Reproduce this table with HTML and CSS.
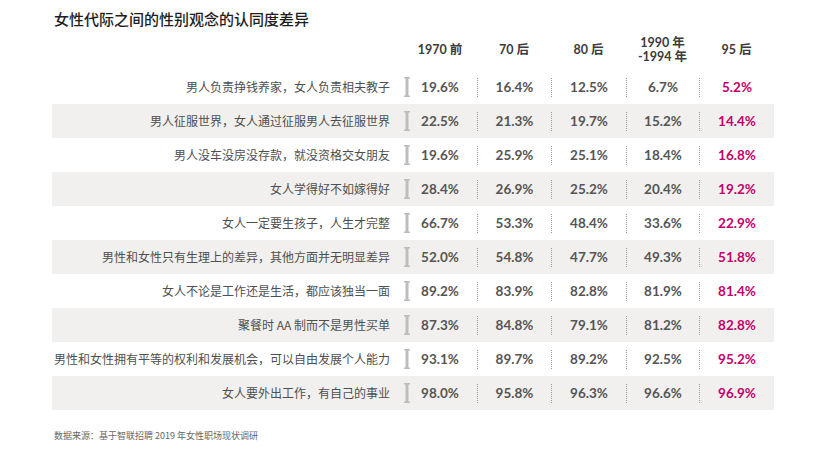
FILE: index.html
```html
<!DOCTYPE html>
<html lang="zh">
<head>
<meta charset="utf-8">
<link rel="stylesheet" href="styles.css">
</head>
<body>
<div class="page">
  <h1 class="title">女性代际之间的性别观念的认同度差异</h1>
  <div class="row head">
    <div class="label"></div>
    <div class="brkcell"></div>
    <div class="hc c1">1970 前</div>
    <div class="hc">70 后</div>
    <div class="hc">80 后</div>
    <div class="hc">1990 年<br>-1994 年</div>
    <div class="hc">95 后</div>
  </div>
  <div class="row">
    <div class="label">男人负责挣钱养家，女人负责相夫教子</div>
    <div class="brkcell"><svg class="brk" width="6" height="20" viewBox="0 0 6 20"><rect x="0" y="0" width="6" height="1.5"/><rect x="1.5" y="0" width="3" height="20"/><rect x="0" y="18.5" width="6" height="1.5"/></svg></div>
    <div class="v c1"><span>19.6%</span></div><div class="v sep"><span>16.4%</span></div><div class="v sep"><span>12.5%</span></div><div class="v sep"><span>6.7%</span></div><div class="v sep pink"><span>5.2%</span></div>
  </div>
  <div class="row alt">
    <div class="label">男人征服世界，女人通过征服男人去征服世界</div>
    <div class="brkcell"><svg class="brk" width="6" height="20" viewBox="0 0 6 20"><rect x="0" y="0" width="6" height="1.5"/><rect x="1.5" y="0" width="3" height="20"/><rect x="0" y="18.5" width="6" height="1.5"/></svg></div>
    <div class="v c1"><span>22.5%</span></div><div class="v sep"><span>21.3%</span></div><div class="v sep"><span>19.7%</span></div><div class="v sep"><span>15.2%</span></div><div class="v sep pink"><span>14.4%</span></div>
  </div>
  <div class="row">
    <div class="label">男人没车没房没存款，就没资格交女朋友</div>
    <div class="brkcell"><svg class="brk" width="6" height="20" viewBox="0 0 6 20"><rect x="0" y="0" width="6" height="1.5"/><rect x="1.5" y="0" width="3" height="20"/><rect x="0" y="18.5" width="6" height="1.5"/></svg></div>
    <div class="v c1"><span>19.6%</span></div><div class="v sep"><span>25.9%</span></div><div class="v sep"><span>25.1%</span></div><div class="v sep"><span>18.4%</span></div><div class="v sep pink"><span>16.8%</span></div>
  </div>
  <div class="row alt">
    <div class="label">女人学得好不如嫁得好</div>
    <div class="brkcell"><svg class="brk" width="6" height="20" viewBox="0 0 6 20"><rect x="0" y="0" width="6" height="1.5"/><rect x="1.5" y="0" width="3" height="20"/><rect x="0" y="18.5" width="6" height="1.5"/></svg></div>
    <div class="v c1"><span>28.4%</span></div><div class="v sep"><span>26.9%</span></div><div class="v sep"><span>25.2%</span></div><div class="v sep"><span>20.4%</span></div><div class="v sep pink"><span>19.2%</span></div>
  </div>
  <div class="row">
    <div class="label">女人一定要生孩子，人生才完整</div>
    <div class="brkcell"><svg class="brk" width="6" height="20" viewBox="0 0 6 20"><rect x="0" y="0" width="6" height="1.5"/><rect x="1.5" y="0" width="3" height="20"/><rect x="0" y="18.5" width="6" height="1.5"/></svg></div>
    <div class="v c1"><span>66.7%</span></div><div class="v sep"><span>53.3%</span></div><div class="v sep"><span>48.4%</span></div><div class="v sep"><span>33.6%</span></div><div class="v sep pink"><span>22.9%</span></div>
  </div>
  <div class="row alt">
    <div class="label">男性和女性只有生理上的差异，其他方面并无明显差异</div>
    <div class="brkcell"><svg class="brk" width="6" height="20" viewBox="0 0 6 20"><rect x="0" y="0" width="6" height="1.5"/><rect x="1.5" y="0" width="3" height="20"/><rect x="0" y="18.5" width="6" height="1.5"/></svg></div>
    <div class="v c1"><span>52.0%</span></div><div class="v sep"><span>54.8%</span></div><div class="v sep"><span>47.7%</span></div><div class="v sep"><span>49.3%</span></div><div class="v sep pink"><span>51.8%</span></div>
  </div>
  <div class="row">
    <div class="label">女人不论是工作还是生活，都应该独当一面</div>
    <div class="brkcell"><svg class="brk" width="6" height="20" viewBox="0 0 6 20"><rect x="0" y="0" width="6" height="1.5"/><rect x="1.5" y="0" width="3" height="20"/><rect x="0" y="18.5" width="6" height="1.5"/></svg></div>
    <div class="v c1"><span>89.2%</span></div><div class="v sep"><span>83.9%</span></div><div class="v sep"><span>82.8%</span></div><div class="v sep"><span>81.9%</span></div><div class="v sep pink"><span>81.4%</span></div>
  </div>
  <div class="row alt">
    <div class="label">聚餐时 AA 制而不是男性买单</div>
    <div class="brkcell"><svg class="brk" width="6" height="20" viewBox="0 0 6 20"><rect x="0" y="0" width="6" height="1.5"/><rect x="1.5" y="0" width="3" height="20"/><rect x="0" y="18.5" width="6" height="1.5"/></svg></div>
    <div class="v c1"><span>87.3%</span></div><div class="v sep"><span>84.8%</span></div><div class="v sep"><span>79.1%</span></div><div class="v sep"><span>81.2%</span></div><div class="v sep pink"><span>82.8%</span></div>
  </div>
  <div class="row">
    <div class="label">男性和女性拥有平等的权利和发展机会，可以自由发展个人能力</div>
    <div class="brkcell"><svg class="brk" width="6" height="20" viewBox="0 0 6 20"><rect x="0" y="0" width="6" height="1.5"/><rect x="1.5" y="0" width="3" height="20"/><rect x="0" y="18.5" width="6" height="1.5"/></svg></div>
    <div class="v c1"><span>93.1%</span></div><div class="v sep"><span>89.7%</span></div><div class="v sep"><span>89.2%</span></div><div class="v sep"><span>92.5%</span></div><div class="v sep pink"><span>95.2%</span></div>
  </div>
  <div class="row alt">
    <div class="label">女人要外出工作，有自己的事业</div>
    <div class="brkcell"><svg class="brk" width="6" height="20" viewBox="0 0 6 20"><rect x="0" y="0" width="6" height="1.5"/><rect x="1.5" y="0" width="3" height="20"/><rect x="0" y="18.5" width="6" height="1.5"/></svg></div>
    <div class="v c1"><span>98.0%</span></div><div class="v sep"><span>95.8%</span></div><div class="v sep"><span>96.3%</span></div><div class="v sep"><span>96.6%</span></div><div class="v sep pink"><span>96.9%</span></div>
  </div>
  <p class="source">数据来源：基于智联招聘 2019 年女性职场现状调研</p>
</div>
</body>
</html>
```

FILE: styles.css
```css
html, body {
  margin: 0;
  padding: 0;
  background: #ffffff;
}

.page {
  width: 722px;
  padding: 9px 0 0 52px;
  font-family: "Noto Sans CJK SC", sans-serif;
}

.title {
  margin: 0 0 0 2px;
  font-size: 15px;
  line-height: 20px;
  font-weight: 500;
  color: #1e1e1e;
}

.row {
  display: grid;
  grid-template-columns: 350px 9px 66px 74px 75px 73px 75px;
  align-items: center;
  height: 34px;
}

.row.alt {
  background: #f1f0ee;
}

.row.head {
  height: 40px;
  margin-top: 1px;
}

.label {
  text-align: right;
  padding-right: 12px;
  font-size: 12px;
  line-height: 16px;
  color: #4f4f4f;
  white-space: nowrap;
}

.brkcell {
  display: flex;
  justify-content: center;
  align-items: center;
  height: 20px;
}

.brk {
  display: block;
  fill: #bdbdbd;
}

.hc {
  text-align: center;
  font-family: "Lato", "Noto Sans CJK SC", sans-serif;
  font-weight: 700;
  font-size: 12.5px;
  line-height: 14px;
  color: #3c3c3c;
}

.hc.c1 {
  padding-right: 8px;
}

.v {
  display: flex;
  justify-content: center;
  align-items: center;
  height: 19px;
  font-family: "Lato", sans-serif;
  font-weight: 700;
  font-size: 13.5px;
  color: #555555;
}

.v.c1 {
  padding-right: 8px;
}

.v.sep {
  border-left: 1px dotted #9a9a9a;
}

.v.pink {
  color: #c4006b;
}

.source {
  margin: 20px 0 0 2px;
  font-size: 9px;
  line-height: 12px;
  color: #666666;
}
```
